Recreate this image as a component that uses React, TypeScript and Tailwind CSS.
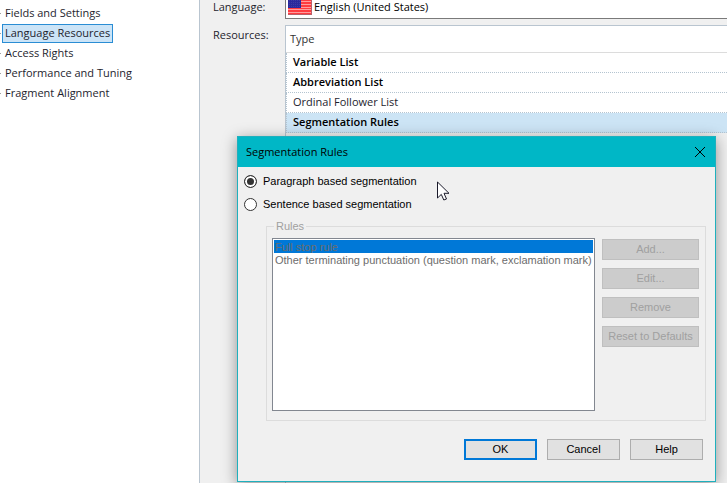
const navItems = [
  "Fields and Settings",
  "Language Resources",
  "Access Rights",
  "Performance and Tuning",
  "Fragment Alignment",
];

const resources = [
  { name: "Variable List", edited: true },
  { name: "Abbreviation List", edited: true },
  { name: "Ordinal Follower List", edited: false },
  { name: "Segmentation Rules", edited: true },
];

const rules = [
  "Full stop rule",
  "Other terminating punctuation (question mark, exclamation mark)",
];

const ruleActions = ["Add...", "Edit...", "Remove", "Reset to Defaults"];

function Sidebar() {
  return (
    <nav className="w-[200px] shrink-0 border-r border-[#b9c5d0] bg-white pt-[3px]">
      <ul>
        {navItems.map((item) => (
          <li key={item} className="flex h-5 items-end">
            <span className="mb-[9px] h-px w-px bg-[#a0a0a0]" />
            <a
              href="#"
              className={
                item === "Language Resources"
                  ? "ml-px border border-[#2a8dd4] bg-[#cce4f7] px-[2px] pb-px leading-4"
                  : "ml-px border border-transparent px-[2px] pb-px leading-4"
              }
            >
              {item}
            </a>
          </li>
        ))}
      </ul>
    </nav>
  );
}

function Flag() {
  return (
    <svg className="pointer-events-none absolute left-[3px] top-[4px]" width="24" height="16" viewBox="0 0 24 16">
      <rect width="24" height="16" fill="#ff3b40" />
      <path d="M0 2.5H24M0 5.5H24M0 8.5H24M0 10.5H24M0 13.5H24" stroke="#ff9c9c" />
      <rect width="13" height="9" fill="#2a2a9c" />
      <path d="M1 1.5H12M1 3.5H12M1 5.5H12M1 7.5H12" stroke="#3c3ca6" strokeDasharray="1 1" />
      <path d="M0 15.5H24M23.5 0V16" stroke="#b8606a" />
    </svg>
  );
}

function ResourcesPane() {
  return (
    <main className="flex min-w-0 flex-1 flex-col overflow-hidden bg-[#f0f0f0] pl-[13px]">
      <div className="-mt-[5px] flex">
        <label htmlFor="language" className="w-[72px] shrink-0 pt-[4px] leading-4">
          Language:
        </label>
        <div className="relative -mr-4 flex-1">
          <select
            id="language"
            className="block h-6 w-full appearance-none border border-[#7a7a7a] bg-white pl-[28px] text-black"
          >
            <option>English (United States)</option>
          </select>
          <Flag />
        </div>
      </div>
      <div className="mt-[6px] flex flex-1">
        <span id="resources" className="w-[72px] shrink-0 pt-[2px] leading-4">
          Resources:
        </span>
        <div className="-mr-4 flex-1 border-l border-t border-[#b9c5d0]">
          <table aria-labelledby="resources" className="w-full border-separate border-spacing-0 text-left leading-4">
            <thead>
              <tr className="h-[27px] bg-white">
                <th className="border-b border-[#dcdcdc] pl-1 font-normal text-[#333]">Type</th>
              </tr>
            </thead>
            <tbody>
              {resources.map((r) => (
                <tr
                  key={r.name}
                  className={r.name === "Segmentation Rules" ? "h-5 bg-[#cce4f5]" : "h-5 bg-white"}
                >
                  <td
                    className={
                      r.edited
                        ? "border-b border-l border-dotted border-[#b4c4d0] pb-px pl-[6px] font-semibold text-black"
                        : "border-b border-l border-dotted border-[#b4c4d0] pb-px pl-[6px]"
                    }
                  >
                    {r.name}
                  </td>
                </tr>
              ))}
            </tbody>
          </table>
        </div>
      </div>
    </main>
  );
}

function Radio({ label, defaultChecked }: { label: string; defaultChecked?: boolean }) {
  return (
    <label className="flex h-[23px] items-center gap-[6px]">
      <input
        type="radio"
        name="segmentation"
        defaultChecked={defaultChecked}
        className="h-[13px] w-[13px] appearance-none rounded-full border border-[#333] bg-white checked:bg-[#333] checked:shadow-[inset_0_0_0_2px_white]"
      />
      {label}
    </label>
  );
}

function SegmentationDialog() {
  return (
    <div
      role="dialog"
      aria-labelledby="dialog-title"
      className="absolute left-[237px] right-[11px] top-[136px] border border-[#1fb0bd] bg-[#f0f0f0] font-['Liberation_Sans',Arial,sans-serif] text-[11px] text-black shadow-[0_3px_14px_rgba(0,0,0,0.4)]"
    >
      <div className="flex h-[30px] items-center justify-between bg-[#00b7c6] pl-2 pr-[9px]">
        <h2 id="dialog-title" className="font-['Open_Sans','Noto_Sans',sans-serif] text-[11px]">
          Segmentation Rules
        </h2>
        <button aria-label="Close">
          <svg width="12" height="12" viewBox="0 0 12 12" fill="none" stroke="black">
            <path d="M1 1L11 11M11 1L1 11" />
          </svg>
        </button>
      </div>

      <div className="px-[6px] pt-[3px]">
        <Radio label="Paragraph based segmentation" defaultChecked />
        <Radio label="Sentence based segmentation" />
      </div>

      <fieldset
        disabled
        className="ml-7 mr-[9px] mt-[2px] flex min-w-0 gap-[7px] border border-[#dcdcdc] pb-[9px] pl-[5px] pr-[6px] pt-1"
      >
        <legend className="ml-[2px] px-[2px] leading-4 text-[#a0a0a0]">Rules</legend>
        <ul
          role="listbox"
          aria-label="Rules"
          className="h-[173px] min-w-0 flex-1 border border-[#828790] bg-white p-px text-[#6d6d6d]"
        >
          {rules.map((rule, i) => (
            <li
              key={rule}
              role="option"
              aria-selected={i === 0}
              className={
                i === 0
                  ? "h-[13px] whitespace-nowrap bg-[#0078d7] px-px leading-[14px]"
                  : "h-[13px] whitespace-nowrap px-px leading-[14px]"
              }
            >
              {rule}
            </li>
          ))}
        </ul>
        <div className="mt-px flex w-[97px] shrink-0 flex-col gap-2">
          {ruleActions.map((action) => (
            <button key={action} className="h-[21px] whitespace-nowrap border border-[#bfbfbf] bg-[#cccccc] text-[#a0a0a0]">
              {action}
            </button>
          ))}
        </div>
      </fieldset>

      <div className="flex justify-end gap-[10px] pb-[21px] pr-3 pt-[18px]">
        <button className="h-[21px] w-[73px] border-2 border-[#0078d7] bg-[#e1e1e1]">OK</button>
        <button className="h-[21px] w-[73px] border border-[#adadad] bg-[#e1e1e1]">Cancel</button>
        <button className="h-[21px] w-[73px] border border-[#adadad] bg-[#e1e1e1]">Help</button>
      </div>
    </div>
  );
}

function Cursor() {
  return (
    <svg className="pointer-events-none absolute left-[437px] top-[181px]" width="13" height="20" viewBox="0 0 13 20">
      <path
        d="M.5 1V17L4.3 13.4L6.8 19L9.5 18L7 12.3H12Z"
        fill="white"
        stroke="#1a1a2a"
        strokeLinejoin="round"
      />
    </svg>
  );
}

export default function App() {
  return (
    <div className="relative flex h-screen overflow-hidden font-['Open_Sans','Noto_Sans',sans-serif] text-[11px] text-[#1e1e2e]">
      <Sidebar />
      <ResourcesPane />
      <SegmentationDialog />
      <Cursor />
    </div>
  );
}
